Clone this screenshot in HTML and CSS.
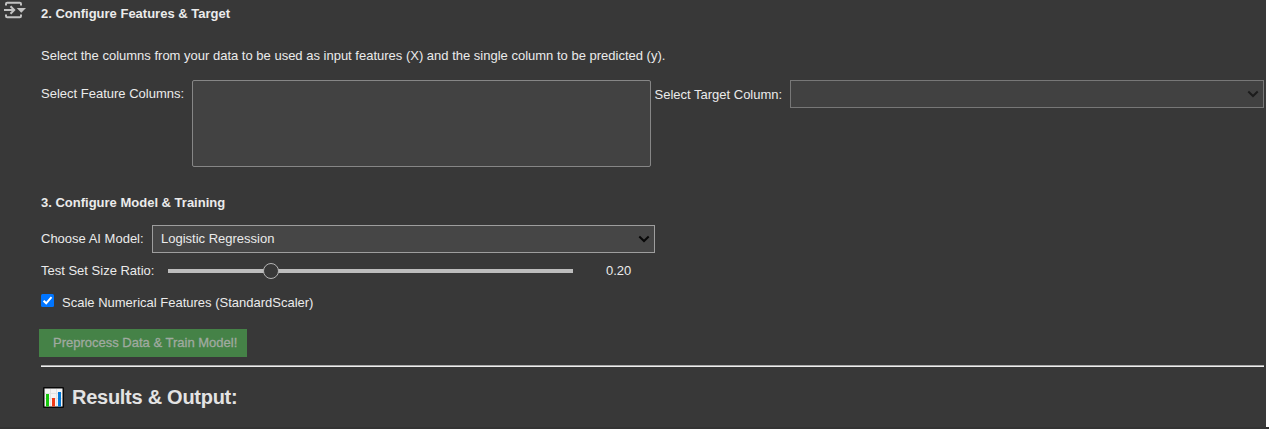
FILE: index.html
```
<!DOCTYPE html>
<html lang="en">
<head>
<meta charset="utf-8">
<title>Model Training</title>
<link rel="stylesheet" href="styles.css">
</head>
<body>
<div class="cell">
  <div class="gutter">
    <svg class="output-icon" width="24" height="20" viewBox="0 0 24 20" fill="none" stroke="#c3c3c3">
      <path d="M2 5.5V4Q2 2.8 3.2 2.8H15.8Q17 2.8 17 4V5.5M2 14.5V16Q2 17.2 3.2 17.2H15.8Q17 17.2 17 16V14.5" stroke-width="2"/>
      <path d="M0 10H10M6.5 6.3L10.2 10L6.5 13.7" stroke-width="2"/>
      <path d="M12.7 8H22L17.3 12.7Z" fill="#c3c3c3" stroke="none"/>
    </svg>
  </div>
  <main class="output">
    <h4 class="heading">2. Configure Features &amp; Target</h4>
    <p class="hint">Select the columns from your data to be used as input features (X) and the single column to be predicted (y).</p>
    <div class="columns">
      <label class="label feature-label">Select Feature Columns:</label>
      <div class="listbox"></div>
      <label class="label target-label">Select Target Column:</label>
      <div class="select target-select">
        <svg class="chevron" width="12" height="8" viewBox="0 0 12 8"><path d="M1.3 1.5L6 6L10.7 1.5" fill="none" stroke="#1c1c1c" stroke-width="2"/></svg>
      </div>
    </div>
    <h4 class="heading model-heading">3. Configure Model &amp; Training</h4>
    <div class="model-row">
      <label class="label model-label">Choose AI Model:</label>
      <div class="select model-select"><span>Logistic Regression</span>
        <svg class="chevron" width="12" height="8" viewBox="0 0 12 8"><path d="M1.3 1.5L6 6L10.7 1.5" fill="none" stroke="#080808" stroke-width="2"/></svg>
      </div>
    </div>
    <div class="slider-row">
      <label class="label slider-label">Test Set Size Ratio:</label>
      <div class="track"><div class="thumb"></div></div>
      <span class="readout">0.20</span>
    </div>
    <div class="check-row">
      <svg class="checkbox" width="13" height="13" viewBox="0 0 13 13"><rect width="13" height="13" rx="1.5" fill="#0075ff"/><path d="M2.6 6.7L5.2 9.3L10.5 3.2" fill="none" stroke="#fff" stroke-width="2"/></svg>
      <span class="check-label">Scale Numerical Features (StandardScaler)</span>
    </div>
    <div class="train-button"><span>Preprocess Data &amp; Train Model!</span></div>
    <div class="rule"></div>
    <h3 class="results">
      <svg class="chart" width="21" height="21" viewBox="0 0 21 21">
        <rect width="21" height="21" rx="1" fill="#080808"/>
        <rect x="1.5" y="1.5" width="18" height="18" fill="#f4f4f4"/>
        <path d="M2 6.5H19M2 11.5H19M7.5 2V19M13.5 2V19" stroke="#e2e2e2"/>
        <rect x="3" y="7" width="3" height="12.5" fill="#16c60c"/>
        <rect x="9" y="11" width="3" height="8.5" fill="#f03a17"/>
        <rect x="15" y="5" width="3" height="14.5" fill="#0078d7"/>
      </svg>
      <span class="results-text">Results &amp; Output:</span>
    </h3>
  </main>
  <div class="edge"></div>
</div>
</body>
</html>
```
FILE: styles.css
```
* { box-sizing: border-box; }
body {
  margin: 0;
  height: 429px;
  overflow: hidden;
  background: #333;
  color: #ebebeb;
  font: 13px/20px "Liberation Sans", Arial, sans-serif;
}
h3, h4, p { margin: 0; }
.cell { display: flex; height: 427px; background: #383838; }
.gutter { width: 41px; flex: none; padding-left: 4px; }
.output-icon { display: block; }
.output { width: 1223px; flex: none; padding-top: 4px; }
.edge { width: 3px; margin-left: auto; background: #fff; }
.heading { height: 20px; font-size: 13px; line-height: 20px; white-space: nowrap; }
.hint { height: 20px; margin-top: 22px; white-space: nowrap; }
.columns { display: flex; margin-top: 14px; height: 87px; }
.label { flex: none; white-space: nowrap; }
.feature-label { width: 151px; padding-top: 4px; }
.listbox { width: 459px; height: 87px; border: 1px solid #868686; border-radius: 2px; background: #424242; }
.target-label { width: 139px; padding: 5px 0 0 3.5px; }
.select {
  display: flex;
  align-items: center;
  justify-content: space-between;
  height: 28px;
  padding: 0 4px 0 8px;
  border: 1px solid #9e9e9e;
  background: #464646;
}
.target-select { width: 474px; border-color: #777; background: #414141; }
.chevron { margin-left: auto; }
.model-heading { margin-top: 26px; }
.model-row { display: flex; margin-top: 12px; height: 28px; }
.model-label { width: 111px; padding-top: 4px; }
.model-select { width: 503px; }
.slider-row { display: flex; align-items: center; margin-top: 8px; height: 20px; }
.slider-label { width: 127px; }
.track { display: flex; align-items: center; width: 405px; height: 4px; background: #bdbdbd; }
.thumb { flex: none; width: 16px; height: 16px; margin-left: 95px; border: 1px solid #b4b4b4; border-radius: 50%; background: #383838; }
.readout { margin-left: 33px; }
.check-row { display: flex; height: 20px; margin-top: 12px; }
.checkbox { margin-top: 1px; }
.check-label { margin-left: 8px; white-space: nowrap; }
.train-button {
  width: 208px;
  height: 28px;
  margin: 16px 0 0 -2px;
  padding-left: 14px;
  background: #458247;
  color: #a0aaa0;
  line-height: 27px;
  white-space: nowrap;
  -webkit-text-stroke: 0.3px #a0aaa0;
}
.rule { height: 2px; margin-top: 8px; border-top: 1px solid #aaa; background: #eee; }
.results { display: flex; align-items: center; height: 30px; margin-top: 15px; padding-left: 2px; font-size: 20px; line-height: 30px; color: #e3e3e3; }
.results-text { margin-left: 8px; white-space: nowrap; letter-spacing: -0.27px; }
```
